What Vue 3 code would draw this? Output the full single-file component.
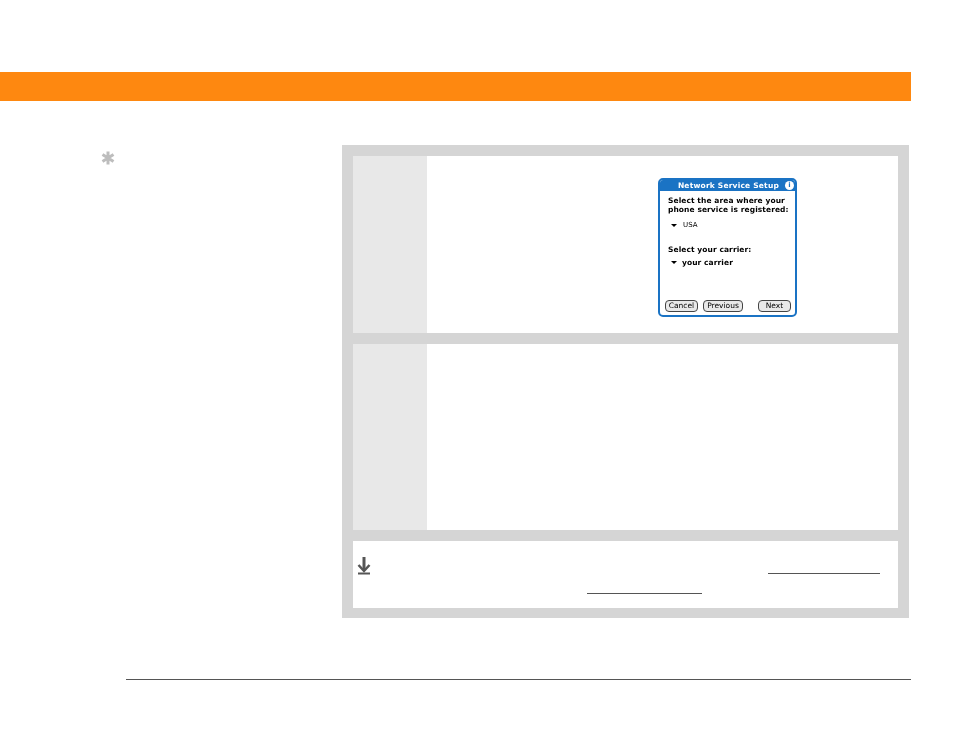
<script setup>
const steps = [{ h: 177, shot: true }, { h: 186, shot: false }]
</script>

<template>
  <div class="page">
    <header class="band"></header>
    <main class="content">
      <aside class="side">
        <svg class="star" width="14" height="14" viewBox="0 0 14 14">
          <path d="M7 0.500v13M1.500 3.500l11 7M12.500 3.500l-11 7" stroke="#bdbdbd" stroke-width="3" fill="none" />
        </svg>
      </aside>
      <section class="panel">
        <div v-for="s in steps" :key="s.h" class="row" :style="{ height: s.h + 'px' }">
          <div class="num"></div>
          <div class="body">
            <div v-if="s.shot" class="device">
              <div class="title">
                <span>Network Service Setup</span>
                <span class="info">i</span>
              </div>
              <div class="form">
                <p class="lbl">Select the area where your<br />phone service is registered:</p>
                <p class="pick small"><i class="tri"></i>USA</p>
                <p class="lbl second">Select your carrier:</p>
                <p class="pick carrier"><i class="tri"></i>your carrier</p>
                <div class="btns">
                  <span class="btn cancel">Cancel</span>
                  <span class="btn prev">Previous</span>
                  <span class="btn next">Next</span>
                </div>
              </div>
            </div>
          </div>
        </div>
        <div class="note">
          <svg class="arrow" width="14" height="20" viewBox="0 0 14 20">
            <path d="M7 0v13" stroke="#555" stroke-width="3" fill="none" />
            <path d="M1.500 8L7 14l5.500-6" stroke="#555" stroke-width="2.500" fill="none" />
            <path d="M1 16.500h12" stroke="#555" stroke-width="2" fill="none" />
          </svg>
          <span class="link one"></span>
          <span class="link two"></span>
        </div>
      </section>
    </main>
    <footer class="rule"></footer>
  </div>
</template>

<style scoped>
.page { width: 954px; height: 737px; background: #fff; padding-top: 72px; box-sizing: border-box; overflow: hidden; font-family: "DejaVu Sans", sans-serif; }
.band { width: 911px; height: 29px; background: #fe8810; }
.content { display: flex; margin-top: 44px; width: 909px; justify-content: space-between; }
.side { padding: 6px 0 0 101px; }
.star { display: block; }
.panel { width: 545px; padding: 11px 11px 10px; background: #d5d5d5; display: flex; flex-direction: column; gap: 11px; }
.row { display: flex; background: #fff; }
.num { width: 74px; background: #e8e8e8; }
.body { flex: 1; display: flex; padding: 22px 0 0 231px; }
.device { width: 139px; height: 139px; box-sizing: border-box; border: 2px solid #1a73c4; border-radius: 5px; background: #fff; display: flex; flex-direction: column; overflow: hidden; filter: blur(0.3px); }
.title { height: 11px; background: #1a73c4; color: #fff; font-size: 7.500px; font-weight: 700; display: flex; justify-content: flex-end; align-items: center; gap: 6px; padding: 0 1px; letter-spacing: 0.2px; white-space: nowrap; }
.info { width: 9px; height: 9px; border-radius: 50%; background: #fff; color: #1a73c4; font-size: 7px; line-height: 9px; text-align: center; }
.form { flex: 1; position: relative; padding: 5px 0 0 8px; color: #000; font-size: 7.500px; font-weight: 700; letter-spacing: 0.08px; }
p { margin: 0; white-space: nowrap; }
.lbl { line-height: 9px; }
.second { margin-top: 15px; }
.pick { display: flex; align-items: center; gap: 5px; margin-top: 5px; padding-left: 3px; line-height: 9px; }
.small { font-weight: 400; font-size: 7px; gap: 6px; margin-top: 7px; }
.carrier { margin-top: 4px; }
.tri { width: 0; height: 0; border: 3.500px solid transparent; border-top: 3.500px solid #000; border-bottom: 0; }
.btns { position: absolute; left: 5px; bottom: 3px; display: flex; }
.btn { box-sizing: border-box; height: 12px; border: 1px solid #444; border-radius: 4px; background: #e9e9e9; font-size: 7.500px; font-weight: 400; line-height: 10px; text-align: center; letter-spacing: 0; }
.cancel { width: 33px; }
.prev { width: 40px; margin-left: 5px; }
.next { width: 33px; margin-left: 15px; }
.note { height: 67px; background: #fff; position: relative; }
.arrow { position: absolute; left: 4px; top: 16px; }
.link { position: absolute; height: 1px; background: #555; }
.one { left: 415px; top: 32px; width: 112px; }
.two { left: 234px; top: 52px; width: 115px; }
.rule { width: 785px; height: 1px; margin: 61px 0 0 126px; background: #555; }
</style>
